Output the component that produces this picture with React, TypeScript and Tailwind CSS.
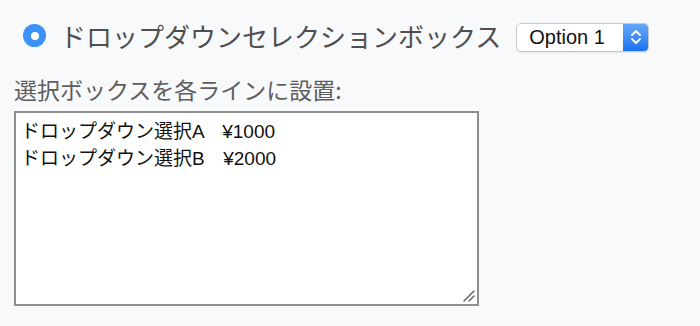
import React from "react";

export default function App() {
  return (
    <div
      className="w-[700px] h-[326px] bg-[#f8f9fb] pl-[14px] pt-[22px] overflow-hidden"
      style={{ fontFamily: '"Liberation Sans", "Noto Sans CJK JP", sans-serif' }}
    >
      <div className="flex items-center h-[30px]">
        <div className="ml-[9px] w-[23px] h-[23px] rounded-full bg-[#3d92f5] flex items-center justify-center shrink-0 -mt-[3px]">
          <div className="w-[8px] h-[8px] rounded-full bg-white" />
        </div>
        <span
          className="ml-[14px] text-[26px] leading-[30px] text-[#4f4f4f] whitespace-nowrap -mt-[3px]"
          style={{ fontFamily: '"Noto Sans CJK JP", sans-serif' }}
        >
          ドロップダウンセレクションボックス
        </span>
        <div className="ml-[15px] w-[133px] h-[29px] flex rounded-[5px] border border-[#c9c9c9] bg-white shadow-[0_1px_1px_rgba(0,0,0,0.08)] overflow-hidden">
          <div className="flex-1 flex items-center pl-[12px] text-[20px] text-[#111] leading-none">
            Option 1
          </div>
          <div className="w-[25px] h-full bg-gradient-to-b from-[#64a8fb] to-[#1871f1] flex items-center justify-center">
            <svg width="12" height="18" viewBox="0 0 12 18" fill="none">
              <path d="M2 7 L6 3 L10 7" stroke="white" strokeWidth="1.8" strokeLinecap="round" strokeLinejoin="round" />
              <path d="M2 11 L6 15 L10 11" stroke="white" strokeWidth="1.8" strokeLinecap="round" strokeLinejoin="round" />
            </svg>
          </div>
        </div>
      </div>
      <div
        className="mt-[23px] text-[23px] leading-[28px] text-[#5e5e5e] whitespace-nowrap"
        style={{ fontFamily: '"Noto Sans CJK JP", sans-serif' }}
      >
        選択ボックスを各ラインに設置:
      </div>
      <div className="relative mt-[8px] w-[465px] h-[195px] border-2 border-[#8f8f8f] bg-white">
        <div className="pl-[5px] pt-[5px] text-[19px] leading-[27px] text-[#111] whitespace-pre [word-spacing:4px]">
          <div>ドロップダウン選択A  ¥1000</div>
          <div>ドロップダウン選択B  ¥2000</div>
        </div>
        <svg className="absolute right-[1px] bottom-[1px]" width="14" height="14" viewBox="0 0 14 14">
          <path d="M2 12 L12 2" stroke="#6a6a6a" strokeWidth="1.6" strokeLinecap="round" />
          <path d="M7 12 L12 7" stroke="#6a6a6a" strokeWidth="1.6" strokeLinecap="round" />
        </svg>
      </div>
    </div>
  );
}
